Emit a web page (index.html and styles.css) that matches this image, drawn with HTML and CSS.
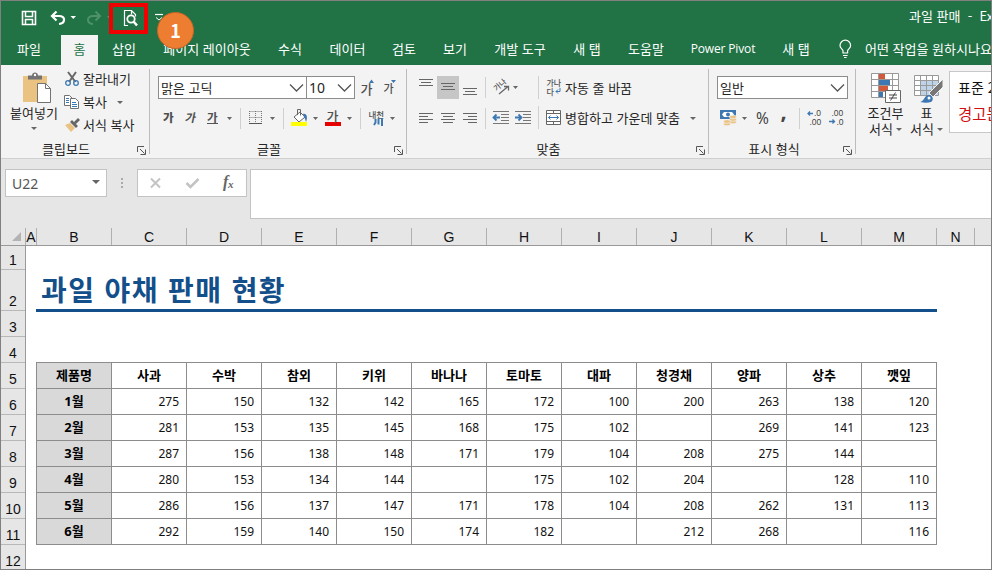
FILE: index.html
```html
<!DOCTYPE html>
<html lang="ko">
<head>
<meta charset="utf-8">
<title>과일 판매 - Excel</title>
<link rel="stylesheet" href="styles.css">
</head>
<body>
<div class="window">
  <header class="titlebar">
    <svg class="quick" width="200" height="33" viewBox="1 1 200 33">
      <g fill="none" stroke="#fff">
        <path d="M22.500 11.500h13v13h-13z" stroke-width="1.600"/>
        <path d="M25.500 11.500v5h7v-5M25.500 24v-4.500h7V24" stroke-width="1.500"/>
        <path d="M52.500 16h6.500c7 0 6.500 7.500 0 8M56.500 11.500L52 16l4.500 4.500" stroke-width="2.200"/>
        <path d="M99.500 16H93c-7 0-6.500 7.500 0 8M95.500 11.500L100 16l-4.500 4.500" stroke="#4f9169" stroke-width="2"/>
        <path d="M128 25.500h-3.500v-15h7l4 4v2M131.500 10.500v4" stroke-width="1.200"/>
        <circle cx="131" cy="19" r="3.700" stroke-width="1.800"/>
        <path d="M133.500 21.500l3.500 4" stroke-width="2.500"/>
        <path d="M155 14.500h8" stroke-width="1.200"/>
        <path d="M156 17.500l3 2.500 3-2.500"/>
      </g>
      <path d="M70.500 16h5.500l-2.700 3z" fill="#fff"/>
      <path d="M107 16h5l-2.500 3z" fill="#4f9169"/>
      <rect x="111" y="5" width="35" height="27" fill="none" stroke="#f00000" stroke-width="4"/>
    </svg>
    <span class="caption">과일 판매&nbsp; -&nbsp; Excel</span>
  </header>
  <div class="badge">1</div>

  <nav class="tabs">
    <span class="file">파일</span><span class="active">홈</span><span>삽입</span><span>페이지 레이아웃</span><span>수식</span><span>데이터</span><span>검토</span><span>보기</span><span>개발 도구</span><span>새 탭</span><span>도움말</span><span class="latin">Power Pivot</span><span>새 탭</span>
    <svg width="42" height="31" viewBox="823 34 42 31" fill="none" stroke="#fff" stroke-width="1.200"><path d="M843 53v-2c0-2-3-2.500-3-5.500a5.300 5.300 0 0 1 10.600 0c0 3-3 3.500-3 5.500v2zM843 55.500h4.600M844 57.500h2.600"/></svg>
    <span class="ask">어떤 작업을 원하시나요?</span>
  </nav>

  <section class="ribbon">
    <div class="group clipboard">
      <div class="body">
        <div class="big paste">
          <svg width="50" height="35" viewBox="8 70 50 35">
            <path d="M22 76h24v26H22z" fill="#eac282"/><path d="M27 79.500v-4h4c0-4 6-4 6 0h4v4z" fill="#737373"/><circle cx="34" cy="75" r="1.200" fill="#fff"/>
            <path d="M36.500 83.500h8l5 5v14h-13z" fill="#fff" stroke="#737373"/><path d="M44.500 83.500v5h5" fill="none" stroke="#737373"/>
          </svg>
          <span>붙여넣기</span><i class="caret"></i>
        </div>
        <div class="stack">
          <div><svg width="18" height="18" viewBox="0 0 18 18" fill="none"><path d="M4 2l7.500 10M12 2L5 12" stroke="#666" stroke-width="2"/><circle cx="4" cy="13" r="2.300" stroke="#3e78b2" stroke-width="1.300"/><circle cx="12" cy="13" r="2.300" stroke="#3e78b2" stroke-width="1.300"/></svg><span>잘라내기</span></div>
          <div><svg width="18" height="18" viewBox="0 0 18 18"><g fill="#fff" stroke="#707070"><path d="M.5 2.500h5l3 3v7h-8z"/><path d="M6.500 5.500h5l3 3v7h-8z"/></g><path d="M2 5.500h3M2 7.500h3M2 9.500h3M8 9.500h4M8 11.500h5M8 13.500h5" stroke="#3e78b2"/></svg><span>복사</span><i class="caret"></i></div>
          <div><svg width="18" height="18" viewBox="0 0 18 18"><path d="M1 9l5-2 5 5-4 4z" fill="#eac282"/><path d="M6 6l2-2 6 6-2 2zM10 6l4-4 2 2-4 4z" fill="#666"/></svg><span>서식 복사</span></div>
        </div>
      </div>
      <footer>클립보드<svg class="launch" width="9" height="9" viewBox="0 0 9 9"><path d="M.5 6V.5H7M3 3l4.500 4.500M8.500 3.500v5h-5" fill="none" stroke="#555"/></svg></footer>
    </div>

    <div class="group font">
      <div class="body rows">
        <div class="row">
          <div class="combo face">맑은 고딕<svg width="16" height="10" viewBox="0 0 16 10"><path d="M1 1.500l6.500 6.500L14 1.500" fill="none" stroke="#555" stroke-width="1.300"/></svg></div>
          <div class="combo size">10<svg width="16" height="10" viewBox="0 0 16 10"><path d="M1 1.500l6.500 6.500L14 1.500" fill="none" stroke="#555" stroke-width="1.300"/></svg></div>
          <svg width="45" height="23" viewBox="355 76 45 23"><g class="ga"><text x="360.500" y="93.500" font-size="13">가</text><text x="383.500" y="93" font-size="11">가</text></g><path d="M369 83l2.500-3.500L374 83zM391 80h5l-2.500 3z" fill="#3e78b2"/></svg>
        </div>
        <div class="row">
          <svg width="240" height="24" viewBox="158 106 240 24">
            <g class="ga"><text x="163" y="122" font-size="11.500" font-weight="900">가</text><text x="0" y="0" font-size="11.500" font-weight="700" transform="translate(184.500 122) skewX(-12)">가</text><text x="207" y="121.500" font-size="11.500" font-weight="700">가</text></g>
            <path d="M207 123.500h11" stroke="#555"/>
            <path d="M240.500 108v21M283.500 108v21M360.500 108v21" stroke="#d0d0d0"/>
            <path d="M249.500 111.500h12M249.500 117.500h12M249.500 111v12M255.500 111v12M261.500 111v12" stroke="#777" stroke-dasharray="1 1"/><path d="M249 123.500h13" stroke="#555"/>
            <path d="M294 117l6-5 5 5-6 5z" fill="#fff" stroke="#666"/><path d="M297.500 115v-5.500h3v6" fill="none" stroke="#666"/><path d="M303 114c4-1 5 4 3 8-1-3-1-4-2-5z" fill="#3e78b2"/>
            <path d="M291 122h16v4h-16z" fill="#ff0"/><path d="M325 122h16v4h-16z" fill="#e80000"/>
            <g class="ga"><text x="326.500" y="120.500" font-size="13">가</text><text x="368.500" y="117.500" font-size="8.500">내천</text></g>
            <path d="M375.500 119v3.500l-1.500 2.500M378.500 118.500v6M382 118v8" fill="none" stroke="#3e78b2" stroke-width="2"/>
            <path d="M227 117h5l-2.500 3zM270 117h5l-2.500 3zM313 117h5l-2.500 3zM347 117h5l-2.500 3zM390 117h5l-2.500 3z" fill="#666"/>
          </svg>
        </div>
      </div>
      <footer>글꼴<svg class="launch" width="9" height="9" viewBox="0 0 9 9"><path d="M.5 6V.5H7M3 3l4.500 4.500M8.500 3.500v5h-5" fill="none" stroke="#555"/></svg></footer>
    </div>

    <div class="group align">
      <div class="body rows">
        <div class="row">
          <svg width="150" height="23" viewBox="415 76 150 23">
            <path d="M437 76h22v23h-22z" fill="#c6c6c6"/>
            <path d="M419 79.500h14M421 82.500h10M419 85.500h14M441 83.500h14M443 86.500h10M441 89.500h14M463 88.500h14M465 91.500h10M463 94.500h14" stroke="#666"/>
            <path d="M485.500 77v21M538.500 75v24" stroke="#d0d0d0"/>
            <g class="ga"><text font-size="7.500" transform="translate(496.500 91.500) rotate(-42)">가나</text><text x="546.500" y="86" font-size="8">가나</text><text x="546.500" y="94.500" font-size="8">다</text></g>
            <path d="M499 94l9-7.500M504 86.500h4.500v4" fill="none" stroke="#666" stroke-width="1.300"/><path d="M513 86h5l-2.500 3z" fill="#666"/>
            <path d="M560 88v3.500h-4M558 89.500l-2 2 2 2" fill="none" stroke="#3e78b2"/>
          </svg><span>자동 줄 바꿈</span>
        </div>
        <div class="row">
          <svg width="150" height="24" viewBox="415 106 150 24">
            <path d="M419 113.500h14M419 116.500h9M419 119.500h14M419 122.500h9M441 113.500h14M443 116.500h10M441 119.500h14M443 122.500h10M463 113.500h14M468 116.500h9M463 119.500h14M468 122.500h9" stroke="#666"/>
            <path d="M485.500 108v21M538.500 106v23" stroke="#d0d0d0"/>
            <path d="M493 111.500h16M501 114.500h8M501 117.500h8M501 120.500h8M493 123.500h16M515 111.500h16M523 114.500h8M523 117.500h8M523 120.500h8M515 123.500h16" stroke="#777"/>
            <path d="M500 117.500h-6M496.500 114.500l-3 3 3 3M515 117.500h6M518.500 114.500l3 3-3 3" fill="none" stroke="#3e78b2" stroke-width="1.800"/>
            <path d="M546.500 110.500h14v14h-14zM546.500 113.500h14M546.500 121.500h14M553.500 110.500v3M553.500 121.500v3" fill="#fff" stroke="#666"/><path d="M548.500 117.500h10M550.500 115.500l-2 2 2 2M556.500 115.500l2 2-2 2" fill="none" stroke="#3e78b2"/>
          </svg><span>병합하고 가운데 맞춤</span><i class="caret"></i>
        </div>
      </div>
      <footer>맞춤<svg class="launch" width="9" height="9" viewBox="0 0 9 9"><path d="M.5 6V.5H7M3 3l4.500 4.500M8.500 3.500v5h-5" fill="none" stroke="#555"/></svg></footer>
    </div>

    <div class="group number">
      <div class="body rows">
        <div class="row"><div class="combo format">일반<svg width="16" height="10" viewBox="0 0 16 10"><path d="M1 1.500l6.500 6.500L14 1.500" fill="none" stroke="#555" stroke-width="1.300"/></svg></div></div>
        <div class="row">
          <svg width="131" height="24" viewBox="717 106 131 24">
            <path d="M720 110h16v9h-16z" fill="#3e78b2"/><path d="M722 114.500l2-2.500h8l2 2.500-2 2.500h-8z" fill="#fff"/><circle cx="728" cy="114.500" r="2" fill="#3e78b2"/>
            <g fill="#eac282" stroke="#f3f3f3" stroke-width=".7"><ellipse cx="733" cy="122" rx="3.500" ry="1.800"/><ellipse cx="733" cy="119.500" rx="3.500" ry="1.800"/><ellipse cx="733" cy="117" rx="3.500" ry="1.800"/><ellipse cx="727" cy="124" rx="3.500" ry="1.800"/><ellipse cx="727" cy="121.500" rx="3.500" ry="1.800"/></g>
            <path d="M742 117h5l-2.500 3z" fill="#666"/><path d="M799.500 108v21" stroke="#d0d0d0"/>
            <g class="num"><text x="756" y="123.500" font-size="15.500">%</text><text x="780.500" y="119" font-size="22" font-weight="700">,</text><g class="dec"><text x="814" y="116" font-size="8.500">.0</text><text x="809.500" y="124.500" font-size="8.500">.00</text><text x="831.500" y="116" font-size="8.500">.00</text><text x="836.500" y="124.500" font-size="8.500">.0</text></g></g>
            <path d="M813 113.500h-5M810 111.500l-2 2 2 2M829 121.500h5.500M832.500 119.500l2 2-2 2" fill="none" stroke="#3e78b2" stroke-width="1.300"/>
          </svg>
        </div>
      </div>
      <footer>표시 형식<svg class="launch" width="9" height="9" viewBox="0 0 9 9"><path d="M.5 6V.5H7M3 3l4.500 4.500M8.500 3.500v5h-5" fill="none" stroke="#555"/></svg></footer>
    </div>

    <div class="group styles">
      <div class="big">
        <svg width="38" height="35" viewBox="867 70 38 35">
          <path d="M871.500 73.500h27v24h-27z" fill="#fff"/><path d="M879 73h6v6h-6zM879 85h9v6h-9z" fill="#d2593c"/><path d="M879 79h11v6h-11zM879 91h4v6h-4z" fill="#3e78b2"/>
          <path d="M871.500 73.500h27v24h-27zM871.500 79.500h27M871.500 85.500h27M871.500 91.500h27M878.500 73v24M892.500 73v24" fill="none" stroke="#999"/>
          <path d="M885.500 90.500h15v12h-15z" fill="#fff" stroke="#666"/><path d="M889 95h8M889 98h8M895.500 92.500l-5 8" stroke="#444"/>
        </svg><span>조건부</span><span>서식<i class="caret"></i></span>
      </div>
      <div class="big">
        <svg width="38" height="35" viewBox="908 70 38 35">
          <path d="M914.500 75.500h24v20h-24z" fill="#fff"/><path d="M921 80h18v15h-18z" fill="#bfd3e8"/><path d="M914.500 75.500h24v20h-24zM914.500 80.500h24M914.500 85.500h24M914.500 90.500h24M920.500 75v20M926.500 75v20M932.500 75v20" fill="none" stroke="#999"/>
          <path d="M943 79v8l-10 10-4-4z" fill="#777" stroke="#f3f3f3"/><path d="M920 102c5-1 4-8 10-7 3 1 4 5 1 7-3 1-6 1-11 0z" fill="#3e78b2"/><circle cx="929" cy="98" r="1.500" fill="#fff"/>
        </svg><span>표</span><span>서식<i class="caret"></i></span>
      </div>
      <div class="gallery"><span>표준 2</span><span class="warn">경고문</span></div>
    </div>
  </section>

  <section class="formula">
    <div class="namebox">U22<i class="caret"></i></div>
    <svg width="30" height="28" viewBox="107 169 30 28"><path d="M121 178h2v2h-2zM121 182h2v2h-2zM121 186h2v2h-2z" fill="#aaa"/></svg>
    <div class="tools">
      <svg width="108" height="26" viewBox="138 170 108 26"><path d="M151 178.500l9 9M160 178.500l-9 9" stroke="#c3c3c3" stroke-width="2"/><path d="M186.500 183l4 4 8-8" fill="none" stroke="#c3c3c3" stroke-width="2.500"/><g class="fx"><text x="223" y="187" font-size="16">f</text><text x="228" y="187.500" font-size="11">x</text></g></svg>
    </div>
    <div class="input"></div>
  </section>

  <div class="columns">
    <span class="corner"><svg width="11" height="10" viewBox="0 0 11 10"><path d="M10 0v9H1z" fill="#b3b3b3"/></svg></span><span>A</span><span>B</span><span>C</span><span>D</span><span>E</span><span>F</span><span>G</span><span>H</span><span>I</span><span>J</span><span>K</span><span>L</span><span>M</span><span>N</span><span></span>
  </div>
  <main class="sheet">
    <div class="rownums"><span>1</span><span>2</span><span>3</span><span>4</span><span>5</span><span>6</span><span>7</span><span>8</span><span>9</span><span>10</span><span>11</span><span>12</span></div>
    <div class="cells">
      <h1>과일 야채 판매 현황</h1>
      <table>
        <thead><tr><th>제품명</th><th>사과</th><th>수박</th><th>참외</th><th>키위</th><th>바나나</th><th>토마토</th><th>대파</th><th>청경채</th><th>양파</th><th>상추</th><th>깻잎</th></tr></thead>
        <tbody>
        <tr><th>1월</th><td>275</td><td>150</td><td>132</td><td>142</td><td>165</td><td>172</td><td>100</td><td>200</td><td>263</td><td>138</td><td>120</td></tr>
        <tr><th>2월</th><td>281</td><td>153</td><td>135</td><td>145</td><td>168</td><td>175</td><td>102</td><td></td><td>269</td><td>141</td><td>123</td></tr>
        <tr><th>3월</th><td>287</td><td>156</td><td>138</td><td>148</td><td>171</td><td>179</td><td>104</td><td>208</td><td>275</td><td>144</td><td></td></tr>
        <tr><th>4월</th><td>280</td><td>153</td><td>134</td><td>144</td><td></td><td>175</td><td>102</td><td>204</td><td></td><td>128</td><td>110</td></tr>
        <tr><th>5월</th><td>286</td><td>156</td><td>137</td><td>147</td><td>171</td><td>178</td><td>104</td><td>208</td><td>262</td><td>131</td><td>113</td></tr>
        <tr><th>6월</th><td>292</td><td>159</td><td>140</td><td>150</td><td>174</td><td>182</td><td></td><td>212</td><td>268</td><td></td><td>116</td></tr>
        </tbody>
      </table>
    </div>
  </main>
</div>
</body>
</html>
```
FILE: styles.css
```css
* { box-sizing: border-box; }
html, body { margin: 0; overflow: hidden; }
body { font: 13px/16px "Noto Sans CJK KR", sans-serif; color: #262626; }
svg { display: block; flex: none; }
.window { position: relative; width: 992px; height: 570px; border: 1px solid #808080; background: #e6e6e6; overflow: hidden; display: flex; flex-direction: column; }
.titlebar { height: 33px; flex: none; background: #217346; color: #fff; display: flex; }
.caption { margin-left: 708px; padding-top: 7px; white-space: nowrap; }
.badge { position: absolute; left: 156px; top: 11px; width: 37px; height: 37px; border-radius: 50%; border: 1px solid #c86426; background: #ed7d31; color: #fff; font: bold 18px/35px "Noto Sans CJK KR", sans-serif; text-align: center; z-index: 2; }
.tabs { height: 31px; flex: none; background: #217346; color: #fff; display: grid; grid-template-columns: 60px 37px 52px 114px 52px 63px 50px 52px 78px 56px 62px 92px 54px 42px 126px; line-height: 29px; text-align: center; white-space: nowrap; overflow: hidden; }
.tabs .file { padding-right: 4px; }
.tabs .active { background: #f3f3f3; color: #217346; margin-top: 1px; line-height: 28px; }
.tabs .latin { font-family: "Open Sans", "Noto Sans", sans-serif; font-size: 12px; letter-spacing: -.15px; }
.tabs .ask { text-align: left; }

.ribbon { height: 94px; flex: none; background: #f3f3f3; border-bottom: 1px solid #d0d0d0; display: flex; padding-top: 4px; white-space: nowrap; overflow: hidden; }
.group { height: 85px; flex: none; border-right: 1px solid #bcbcbc; display: flex; flex-direction: column; }
.clipboard { width: 149px; }
.font { width: 257px; }
.align { width: 302px; }
.number { width: 147px; }
.body { height: 72px; flex: none; display: flex; }
.rows { flex-direction: column; padding: 7px 0 0 8px; gap: 7px; }
.row { display: flex; align-items: center; height: 24px; }
.row:first-child { height: 23px; }
.group footer { position: relative; height: 16px; flex: none; text-align: center; line-height: 16px; padding-right: 18px; }
.align footer { padding-right: 18px; }
.number footer { padding-right: 16px; }
.launch { position: absolute; right: 3px; top: 5px; }
.caret { display: inline-block; flex: none; width: 0; height: 0; border: 3px solid transparent; border-top-color: #666; border-bottom: 0; }
.big { display: flex; flex-direction: column; align-items: center; text-align: center; flex: none; }
.paste { width: 50px; margin-left: 8px; padding-top: 1px; }
.paste .caret { margin-top: 6px; }
.stack { margin-left: 5px; display: flex; flex-direction: column; gap: 5px; padding-top: 1px; }
.stack div { display: flex; align-items: center; height: 18px; gap: 1px; }
.stack .caret { margin-left: 9px; }
.combo { height: 23px; border: 1px solid #8c8c8c; background: #fff; display: flex; justify-content: space-between; align-items: center; padding: 0 1px 0 2px; }
.face { width: 149px; }
.size { width: 49px; margin-left: -1px; font: 14px "Noto Sans", sans-serif; }
.format { width: 131px; }
.align .body { padding-left: 8px; }
.align .caret { margin-left: 10px; }
.ga { font-family: "Noto Sans CJK KR", sans-serif; font-weight: 500; fill: #505050; }
.num { font-family: "Noto Sans", sans-serif; fill: #444; }
.dec { font-family: "Liberation Sans", sans-serif; }
.styles { flex-direction: row; border: 0; width: 136px; padding-top: 1px; }
.styles .big { width: 41px; line-height: 16px; }
.styles .big:first-child { margin-left: 9px; }
.styles .big span { display: flex; align-items: center; gap: 3px; height: 16px; }
.gallery { width: 60px; height: 62px; margin: 1px 0 0 2px; border: 1px solid #c8c8c8; background: #fff; display: flex; flex-direction: column; font-size: 14px; color: #111; padding: 7px 0 0 8px; gap: 10px; flex: none; }
.gallery .warn { font-size: 15.500px; color: #d01010; }

.formula { height: 60px; flex: none; padding: 10px 0 0 4px; display: flex; align-items: flex-start; }
.namebox { width: 102px; height: 28px; border: 1px solid #c3c3c3; background: #fff; display: flex; align-items: center; justify-content: space-between; padding: 0 6px; font: 14px "Noto Sans", sans-serif; color: #555; }
.namebox .caret { border-width: 4px 4px 0; margin-top: -3px; }
.tools { border: 1px solid #c3c3c3; background: #fff; width: 110px; height: 28px; }
.fx { font-family: "Liberation Serif", serif; font-style: italic; font-weight: bold; fill: #666; }
.input { flex: 1; margin-left: 3px; height: 50px; border: 1px solid #c3c3c3; border-right: 0; background: #fff; }

.columns { height: 27px; flex: none; border-bottom: 1px solid #999; display: grid; grid-template-columns: 25px 11px repeat(12, 75px) 38px 16px; font: 14px/18px "Liberation Sans", sans-serif; color: #111; text-align: center; padding-top: 9px; }
.columns span { border-right: 1px solid #b0b0b0; height: 17px; }
.columns span:last-child { border: 0; }
.columns .corner { display: flex; justify-content: flex-end; align-items: center; padding-right: 3px; }
.sheet { flex: none; height: 323px; display: flex; background: #fff; }
.rownums { width: 25px; flex: none; background: #e6e6e6; border-right: 1px solid #999; display: grid; grid-template-rows: 24px 41px repeat(10, 26px); font: 14px/16px "Liberation Sans", sans-serif; color: #111; text-align: center; }
.rownums span { border-bottom: 1px solid #b8b8b8; display: flex; align-items: flex-end; justify-content: center; padding-bottom: 1px; }
.cells { padding: 24px 0 0 10px; }
h1 { margin: 0; width: 901px; height: 42px; border-bottom: 3px solid #134f8a; color: #134f8a; font: bold 28px/38px "Noto Sans CJK KR", sans-serif; letter-spacing: 1.400px; padding-left: 5px; }
table { margin-top: 50px; width: 901px; table-layout: fixed; border-collapse: collapse; font: 12px "Noto Sans", "Noto Sans CJK KR", sans-serif; color: #111; }
tr { height: 26px; }
th, td { border: 1px solid #8c8c8c; padding: 0; height: 26px; line-height: 16px; }
td { text-align: right; padding-right: 7px; }
th { font-size: 13px; font-weight: 700; text-align: center; color: #000; padding-bottom: 2px; }
th:first-child { background: #d9d9d9; }
```
